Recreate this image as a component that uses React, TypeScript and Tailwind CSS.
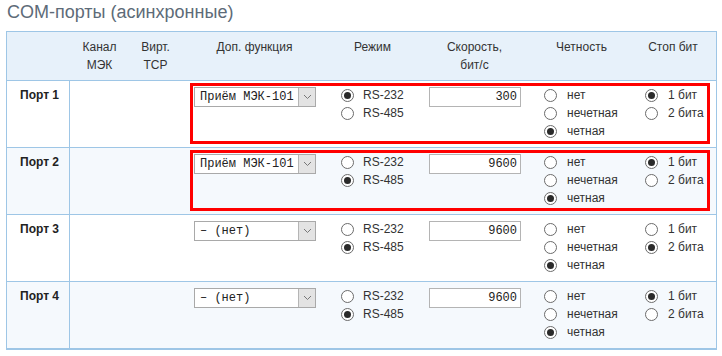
import React from "react";

const Radio = ({ checked }: { checked?: boolean }) => (
  <span className="inline-flex w-[13px] h-[13px] rounded-full border border-[#6b6b6b] bg-white items-center justify-center shrink-0">
    {checked && <span className="w-[7px] h-[7px] rounded-full bg-[#2a2a2a]" />}
  </span>
);

const Opt = ({ checked, label, gap }: { checked?: boolean; label: string; gap: string }) => (
  <div className={`flex items-center h-[18px] ${gap}`}>
    <Radio checked={checked} />
    <span>{label}</span>
  </div>
);

const Select = ({ value }: { value: string }) => (
  <div className="ml-[1px] mt-[1px] flex w-[122px] h-[20px] border border-[#a9a9a9] bg-white">
    <div className="flex-1 pl-[5px] leading-[18px] font-['Liberation_Mono',monospace] text-[12px] text-[#222] whitespace-nowrap overflow-hidden">
      {value}
    </div>
    <div className="w-[17px] h-full bg-[#e3e3e3] border-l border-[#b5b5b5] flex items-center justify-center">
      <svg width="9" height="6" viewBox="0 0 9 6">
        <polyline points="1,1 4.5,4.5 8,1" fill="none" stroke="#777" strokeWidth="1" />
      </svg>
    </div>
  </div>
);

type Row = {
  name: string;
  func: string;
  mode: 0 | 1;
  speed: string;
  parity: 0 | 1 | 2;
  stop: 0 | 1;
  red: boolean;
  alt: boolean;
};

const rows: Row[] = [
  { name: "Порт 1", func: "Приём МЭК-101", mode: 0, speed: "300", parity: 2, stop: 0, red: true, alt: false },
  { name: "Порт 2", func: "Приём МЭК-101", mode: 1, speed: "9600", parity: 2, stop: 0, red: true, alt: true },
  { name: "Порт 3", func: "– (нет)", mode: 1, speed: "9600", parity: 2, stop: 1, red: false, alt: false },
  { name: "Порт 4", func: "– (нет)", mode: 1, speed: "9600", parity: 2, stop: 0, red: false, alt: true },
];

export default function App() {
  return (
    <div className="w-[722px] h-[356px] bg-white font-['Liberation_Sans',Arial,sans-serif] text-[12px] text-[#333]">
      <div className="h-[31px] pl-[7px] pt-[1px] text-[18px] leading-[22px] text-[#5d6b78]">
        COM-порты (асинхронные)
      </div>
      <div className="ml-[6px] w-[711px] border border-b-2 border-[#9ec6e6]">
        {/* header */}
        <div className="flex h-[49px] border-b border-[#9ec6e6] bg-[#e7f1fa] leading-[18px] pt-[6px] text-center text-[#333]">
          <div className="w-[63px]" />
          <div className="w-[59px]">Канал<br />МЭК</div>
          <div className="w-[53px]">Вирт.<br />TCP</div>
          <div className="w-[145px]">Доп. функция</div>
          <div className="w-[91px]">Режим</div>
          <div className="w-[113px]">Скорость,<br />бит/с</div>
          <div className="w-[101px]">Четность</div>
          <div className="w-[82px]">Стоп бит</div>
        </div>
        {rows.map((r, i) => (
          <div
            key={r.name}
            className={`flex ${i < rows.length - 1 ? "h-[67px] border-b border-[#9ec6e6]" : "h-[66px]"} ${
              r.alt ? "bg-[#f5f9fd]" : "bg-white"
            }`}
          >
            <div className="w-[63px] shrink-0 border-r border-[#9ec6e6] pl-[13px] pt-[5px] leading-[18px] font-bold text-[#222]">
              {r.name}
            </div>
            <div className="w-[120px] shrink-0" />
            <div
              className={`mt-[2px] w-[520px] h-[61px] shrink-0 flex border-[3px] ${
                r.red ? "border-[#ff0000]" : "border-transparent"
              }`}
            >
              <div className="w-[148px] shrink-0">
                <Select value={r.func} />
              </div>
              <div className="w-[88px] shrink-0 leading-[18px]">
                <Opt checked={r.mode === 0} label="RS-232" gap="gap-[9px]" />
                <Opt checked={r.mode === 1} label="RS-485" gap="gap-[9px]" />
              </div>
              <div className="w-[115px] shrink-0">
                <div className="mt-[1px] w-[92px] h-[20px] border border-[#b4b4b4] bg-white text-right pr-[3px] leading-[18px] font-['Liberation_Mono',monospace] text-[12px] text-[#222]">
                  {r.speed}
                </div>
              </div>
              <div className="w-[101px] shrink-0 leading-[18px]">
                <Opt checked={r.parity === 0} label="нет" gap="gap-[10px]" />
                <Opt checked={r.parity === 1} label="нечетная" gap="gap-[10px]" />
                <Opt checked={r.parity === 2} label="четная" gap="gap-[10px]" />
              </div>
              <div className="flex-1 leading-[18px]">
                <Opt checked={r.stop === 0} label="1 бит" gap="gap-[10px]" />
                <Opt checked={r.stop === 1} label="2 бита" gap="gap-[10px]" />
              </div>
            </div>
          </div>
        ))}
      </div>
    </div>
  );
}
